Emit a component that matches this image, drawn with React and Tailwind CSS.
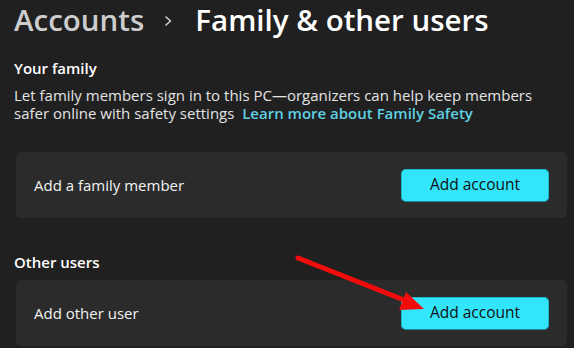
import React from "react";

function Card({ label }) {
  return (
    <div className="ml-[16px] mr-[7px] h-[66px] rounded-[5px] bg-[#2b2b2b] flex items-center justify-between pl-[18px] pr-[18px]">
      <span className="text-[15px] text-[#f2f2f2] leading-[20px]">{label}</span>
      <button className="w-[148px] h-[33px] rounded-[5px] bg-[#33e5fb] border border-[#1fb9cc] border-b-[#148c9a] text-[15.5px] text-[#111111] flex items-center justify-center">
        Add account
      </button>
    </div>
  );
}

export default function App() {
  return (
    <div
      className="relative w-[574px] h-[348px] overflow-hidden bg-[#202020] text-white"
      style={{ fontFamily: '"Open Sans", "Noto Sans", sans-serif' }}
    >
      <div className="h-[40px] pl-[14px] flex items-center leading-[40px] text-[29.5px] font-semibold whitespace-nowrap">
        <span className="text-[#cdcdcd]">Accounts</span>
        <svg width="10" height="12" viewBox="0 0 10 12" className="ml-[19px] mr-[22px] mt-[2px]">
          <path d="M3 2 L7.5 6 L3 10" fill="none" stroke="#d0d0d0" strokeWidth="1.6" strokeLinecap="round" strokeLinejoin="round" />
        </svg>
        <span className="text-white">Family &amp; other users</span>
      </div>

      <div className="mt-[18px] pl-[14px] text-[15px] leading-[20px] font-semibold text-white">Your family</div>
      <div className="mt-[8px] pl-[14px] text-[15px] text-[#e4e4e4] whitespace-nowrap">
        <div className="h-[18px] leading-[18px]">Let family members sign in to this PC—organizers can help keep members</div>
        <div className="h-[18px] leading-[18px]">
          safer online with safety settings{"\u00a0\u00a0"}
          <span className="font-semibold text-[#5fd0e2]">Learn more about Family Safety</span>
        </div>
      </div>

      <div className="mt-[30px]">
        <Card label="Add a family member" />
      </div>

      <div className="mt-[34px] pl-[14px] text-[15px] leading-[20px] font-semibold text-white">Other users</div>
      <div className="mt-[8px]">
        <Card label="Add other user" />
      </div>

      <svg className="absolute left-0 top-0 pointer-events-none" width="574" height="348" viewBox="0 0 574 348">
        <line x1="298" y1="258" x2="404" y2="300" stroke="#f20c0c" strokeWidth="5" strokeLinecap="round" />
        <polygon points="424,309 399,310 406,292" fill="#f20c0c" />
      </svg>
    </div>
  );
}
